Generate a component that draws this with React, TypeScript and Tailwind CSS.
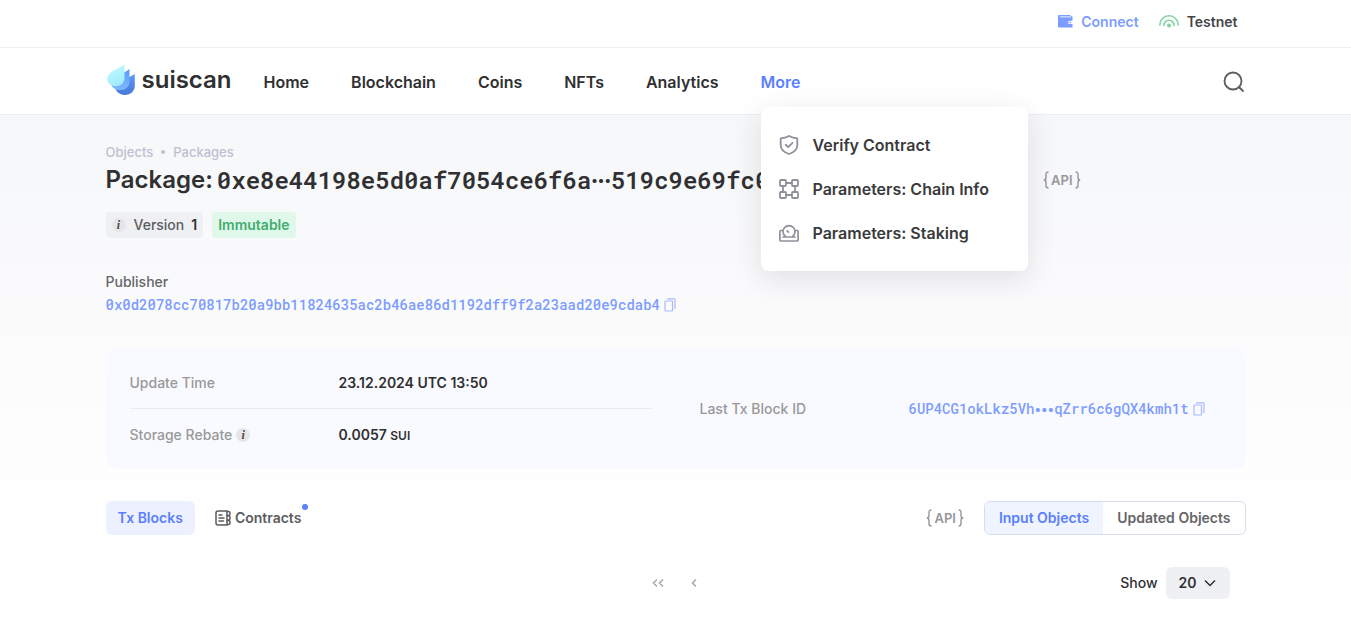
import React from "react";

const mono = "font-['Roboto_Mono','Liberation_Mono',monospace]";

function Logo() {
  return (
    <svg width="30" height="32" viewBox="0 0 30 32" aria-hidden="true">
      <defs>
        <linearGradient id="drop-back" x1="0" y1="0" x2="0" y2="1">
          <stop offset="0" stopColor="#5b9af5" />
          <stop offset="1" stopColor="#4878d8" />
        </linearGradient>
        <linearGradient id="drop-mid" x1="0" y1="0" x2="0" y2="1">
          <stop offset="0" stopColor="#5a9bf8" />
          <stop offset="1" stopColor="#7db8ff" />
        </linearGradient>
        <linearGradient id="drop-front" x1="0" y1="0" x2="0.4" y2="1">
          <stop offset="0" stopColor="#c4fbff" />
          <stop offset="1" stopColor="#a2ecff" />
        </linearGradient>
      </defs>
      <path d="M28.800 10v12c0 5-4.500 9-9.800 9-5 0-8.500-2.800-10-7.500 1-5 12-8.500 19.800-13.500z" fill="url(#drop-back)" />
      <path d="M23.500 5v12.500c0 5-4 8.500-9 8.500-4.500 0-8-1.500-9-5C7 14 17 9.500 23.500 5z" fill="url(#drop-mid)" />
      <path d="M18.500.5C14 4 6.500 6 2.800 10.500c-3.300 4-1.500 11.500 7 11.700 5.400 0 8.700-3.400 8.700-8.700z" fill="url(#drop-front)" />
    </svg>
  );
}

function WalletIcon() {
  return (
    <svg width="15" height="13" viewBox="0 0 15 13" aria-hidden="true">
      <path d="M1 0h11.500v1.200H14.500V12.500H1a1 1 0 0 1-1-1V1a1 1 0 0 1 1-1z" fill="#7d9cff" />
      <path d="M2 1.200h11v1.300H2z" fill="#d3ddff" />
      <path d="M15 5.800h-3.200a1.600 1.600 0 0 0 0 3.200H15z" fill="#fff" />
      <circle cx="12.300" cy="7.400" r=".9" fill="#7d9cff" />
    </svg>
  );
}

function SignalIcon() {
  return (
    <svg width="20" height="13" viewBox="0 0 20 13" fill="none" stroke="#7ed3a1" strokeWidth="1.600" strokeLinecap="round" aria-hidden="true">
      <path d="M.8 10a9.200 9.200 0 0 1 18.400 0" />
      <path d="M4.800 10.500a5.200 5.200 0 0 1 10.400 0" />
      <circle cx="10" cy="10.600" r="1.200" fill="#7ed3a1" />
    </svg>
  );
}

function SearchIcon() {
  return (
    <svg width="22" height="22" viewBox="0 0 22 22" fill="none" stroke="#5c5c5e" strokeWidth="1.800" strokeLinecap="round" aria-hidden="true">
      <circle cx="10" cy="10" r="8.500" />
      <path d="M16.500 16.500l3.500 3.500" />
    </svg>
  );
}

function ShieldIcon() {
  return (
    <svg width="20" height="20" viewBox="0 0 20 20" fill="none" stroke="#8f919a" strokeWidth="1.800" strokeLinecap="round" strokeLinejoin="round" aria-hidden="true">
      <path d="M10 1c2.600 1.500 5.300 2.200 8.300 2.300V10c0 4.500-4 7.500-8.300 9-4.300-1.500-8.300-4.500-8.300-9V3.300C4.700 3.200 7.400 2.500 10 1z" />
      <path d="M6.700 9.700l2.500 2.500 4.300-4.400" />
    </svg>
  );
}

function ChainIcon() {
  return (
    <svg width="20" height="20" viewBox="0 0 20 20" fill="none" stroke="#8f919a" strokeWidth="1.800" aria-hidden="true">
      <rect x="1" y="1" width="6" height="6" rx="1" />
      <rect x="13" y="1" width="6" height="6" rx="1" />
      <rect x="1" y="13" width="6" height="6" rx="1" />
      <rect x="13" y="13" width="6" height="6" rx="1" />
      <path d="M7 4h6M7 16h6M4 7v6M16 7v6" />
    </svg>
  );
}

function StakingIcon() {
  return (
    <svg width="20" height="20" viewBox="0 0 20 20" fill="none" stroke="#8f919a" strokeWidth="1.700" strokeLinecap="round" strokeLinejoin="round" aria-hidden="true">
      <path d="M3.500 7.500H1.900a1 1 0 0 0-1 1V17a1 1 0 0 0 1 1h16.200a1 1 0 0 0 1-1V8.500a1 1 0 0 0-1-1h-1.600" />
      <path d="M4 14h12" />
      <path d="M6.200 13.200a6 6 0 1 1 7.600 0" />
      <path d="M8.200 7.800l1.300 1.300" />
    </svg>
  );
}

function CopyIcon() {
  return (
    <svg width="12" height="14" viewBox="0 0 12 14" fill="none" stroke="#a9b9fd" strokeWidth="1.200" aria-hidden="true">
      <rect x="1" y="3" width="7.500" height="10" rx="0.800" />
      <path d="M3 .8h7.200a.8.8 0 0 1 .8.8V11" />
    </svg>
  );
}

function ContractIcon() {
  return (
    <svg width="16" height="16" viewBox="0 0 16 16" fill="none" stroke="#5c5c5e" strokeWidth="1.500" strokeLinecap="round" strokeLinejoin="round" aria-hidden="true">
      <path d="M12 1H3a2 2 0 0 0-2 2v10a2 2 0 0 0 2 2h9z" />
      <path d="M12 1.500h1.500a1.500 1.500 0 0 1 1.500 1.500v1a1.500 1.500 0 0 1-1.500 1.500H12M12 5.800h1.500A1.500 1.500 0 0 1 15 7.300v1.200a1.500 1.500 0 0 1-1.500 1.500H12M12 10.500h1.500A1.500 1.500 0 0 1 15 12v1a1.500 1.500 0 0 1-1.500 1.500H12" />
      <path d="M4 5h3M4 8h5M4 11h4.500" />
    </svg>
  );
}

function Chevrons({ double }: { double?: boolean }) {
  return (
    <svg width="12" height="8" viewBox="0 0 12 8" fill="none" stroke="#a8a8aa" strokeWidth="1.500" aria-hidden="true">
      {double ? <path d="M5 .5L1.500 4 5 7.500M11 .5L7.500 4 11 7.500" /> : <path d="M8 .5L4.500 4 8 7.500" />}
    </svg>
  );
}

function Info() {
  return (
    <span className="flex size-[14px] items-center justify-center rounded-full bg-[#e6e6e8] font-['Liberation_Serif',serif] text-[12px] leading-none font-bold text-[#48484a] italic">
      i
    </span>
  );
}

function ApiButton() {
  return (
    <button type="button" className="flex items-center gap-0.5 text-[13px] leading-5 font-semibold text-[#97979c]">
      <svg width="6" height="18" viewBox="0 0 6 18" fill="none" stroke="currentColor" strokeWidth="1.400" aria-hidden="true">
        <path d="M5.500 1C3.500 1 3 1.800 3 3.500v3C3 8 2.500 9 .8 9 2.500 9 3 10 3 11.500v3c0 1.700.5 2.500 2.500 2.500" />
      </svg>
      API
      <svg width="6" height="18" viewBox="0 0 6 18" fill="none" stroke="currentColor" strokeWidth="1.400" aria-hidden="true">
        <path d="M.5 1C2.500 1 3 1.800 3 3.500v3C3 8 3.500 9 5.200 9 3.500 9 3 10 3 11.500v3c0 1.700-.5 2.500-2.500 2.500" />
      </svg>
    </button>
  );
}

const links = ["Home", "Blockchain", "Coins", "NFTs", "Analytics"];
const menu = [
  { label: "Verify Contract", icon: <ShieldIcon /> },
  { label: "Parameters: Chain Info", icon: <ChainIcon /> },
  { label: "Parameters: Staking", icon: <StakingIcon /> },
];

export default function App() {
  return (
    <div className="min-h-screen bg-white font-[Inter,sans-serif] text-[#303032]">
      <div className="border-b border-[#f0f0f2]">
        <div className="mx-auto flex h-[47px] max-w-[1140px] items-center justify-end gap-5 pr-2 pb-1 text-[14px] leading-5 font-semibold">
          <button type="button" className="flex items-center gap-2 text-[#7d9cff]">
            <WalletIcon />
            Connect
          </button>
          <button type="button" className="flex items-center gap-2 text-[#454547]">
            <SignalIcon />
            Testnet
          </button>
        </div>
      </div>

      <header className="border-b border-[#eeeff2]">
        <div className="mx-auto flex h-[66px] max-w-[1140px] items-center pt-0.5">
          <a href="#home" className="mr-8 flex items-center gap-1.5 pb-1 text-[24px] leading-8 font-semibold">
            <Logo />
            <span>suiscan</span>
          </a>
          <nav className="flex items-center gap-[42px] text-[16px] leading-6 font-semibold">
            {links.map((l) => (
              <a key={l} href={"#" + l.toLowerCase()}>{l}</a>
            ))}
            <div className="relative">
              <button type="button" aria-expanded="true" className="text-[#5a7fff]">More</button>
              <ul className="absolute top-[37px] left-0 z-10 flex w-[267px] flex-col gap-5 rounded-lg bg-white px-[18px] py-[26px] shadow-[0_8px_30px_rgba(40,44,50,0.12)]">
                {menu.map((m) => (
                  <li key={m.label}>
                    <a href="#more" className="flex items-center gap-3.5 whitespace-nowrap text-[#3a3a3c]">
                      {m.icon}
                      {m.label}
                    </a>
                  </li>
                ))}
              </ul>
            </div>
          </nav>
          <button type="button" aria-label="Search" className="mr-px ml-auto"><SearchIcon /></button>
        </div>
      </header>

      <main className="bg-linear-to-b from-[#f6f7f9] to-white to-[420px]">
        <div className="mx-auto max-w-[1140px] pt-[27px] pb-5">
          <div className="flex items-center gap-2 text-[13px] leading-5 font-medium text-[#bdc0d0]">
            <a href="#objects">Objects</a>
            <span className="size-1 rounded-full bg-current" />
            <a href="#packages">Packages</a>
          </div>
          <div className="flex items-center justify-between pr-[165px]">
            <h1 className="flex items-center gap-1 text-[24px] leading-9 font-semibold">
              Package:
              <span className={mono + " flex items-center"}>
                0xe8e44198e5d0af7054ce6f6a
                <span className="font-[Inter,sans-serif] text-[13px]">•••</span>
                519c9e69fc0b4d7e82
              </span>
            </h1>
            <ApiButton />
          </div>
          <div className="mt-3.5 flex gap-[9px] text-[14px] leading-[26px] font-semibold">
            <span className="flex items-center gap-2 rounded bg-[#eff0f4] px-1.5 text-[#5c5c5e]">
              <Info />
              <span className="flex gap-[7px] font-medium">Version <b className="font-semibold text-[#303032]">1</b></span>
            </span>
            <span className="rounded bg-[#e0f8ea] px-1.5 text-[#43ad70]">Immutable</span>
          </div>

          <p className="mt-[34px] text-[14px] leading-5 font-medium text-[#666668]">Publisher</p>
          <div className="mt-[3px] flex items-center gap-1">
            <a href="#publisher" className={mono + " text-[14px] leading-5 font-medium text-[#7d9cff]"}>
              0x0d2078cc70817b20a9bb11824635ac2b46ae86d1192dff9f2a23aad20e9cdab4
            </a>
            <button type="button" aria-label="Copy publisher"><CopyIcon /></button>
          </div>

          <section className="mt-[34px] flex items-center gap-12 rounded-xl bg-[#f9faff] px-6 py-2 text-[14px] leading-5 font-medium">
            <dl className="flex-1">
              <div className="flex h-[52px] items-center border-b border-[#eaebf0]">
                <dt className="w-[209px] text-[#98989a]">Update Time</dt>
                <dd className="font-semibold">23.12.2024 UTC 13:50</dd>
              </div>
              <div className="flex h-[52px] items-center">
                <dt className="flex w-[209px] items-center gap-1 text-[#98989a]">Storage Rebate <Info /></dt>
                <dd className="font-semibold">0.0057 <span className="text-[12px]">SUI</span></dd>
              </div>
            </dl>
            <dl className="flex flex-1 items-center">
              <dt className="w-[209px] text-[#98989a]">Last Tx Block ID</dt>
              <dd className="flex items-center gap-1">
                <a href="#tx" className={mono + " flex items-center text-[#7d9cff]"}>
                  6UP4CG1okLkz5Vh
                  <span className="font-[Inter,sans-serif] text-[13px] font-semibold">•••</span>
                  qZrr6c6gQX4kmh1t
                </a>
                <button type="button" aria-label="Copy block ID"><CopyIcon /></button>
              </dd>
            </dl>
          </section>

          <div className="mt-8 flex items-center justify-between text-[14px] leading-5 font-semibold">
            <div className="flex items-center gap-5">
              <button type="button" className="h-[34px] rounded-md bg-[#edf1ff] px-3 text-[#5a7fff]">Tx Blocks</button>
              <button type="button" className="relative flex h-[34px] items-center gap-1 text-[#5c5c5e]">
                <ContractIcon />
                Contracts
                <span className="absolute top-[3px] -right-[7px] size-1.5 rounded-full bg-[#5a7fff]" />
              </button>
            </div>
            <div className="flex items-center gap-5">
              <ApiButton />
              <div className="flex h-[34px] overflow-hidden rounded-md border border-[#dadcec] bg-white">
                <button type="button" className="bg-[#eff4ff] px-3.5 text-[#5a7fff]">Input Objects</button>
                <button type="button" className="px-3.5 text-[#666668]">Updated Objects</button>
              </div>
            </div>
          </div>

          <div className="mt-8 grid grid-cols-3 items-center text-[14px] leading-5 font-semibold">
            <div className="col-start-2 flex justify-center gap-6">
              <button type="button" aria-label="First page"><Chevrons double /></button>
              <button type="button" aria-label="Previous page"><Chevrons /></button>
            </div>
            <div className="flex items-center justify-end gap-2 pr-4">
              <label htmlFor="page-size" className="font-medium">Show</label>
              <div className="relative">
                <select id="page-size" defaultValue="20" className="h-8 w-16 appearance-none rounded-md bg-[#eff0f4] pl-[13px]">
                  <option>20</option>
                  <option>40</option>
                  <option>60</option>
                </select>
                <svg className="pointer-events-none absolute top-3 right-3.5" width="12" height="8" viewBox="0 0 12 8" fill="none" stroke="#303032" strokeWidth="1.500" aria-hidden="true">
                  <path d="M1 1.500L6 6.500l5-5" />
                </svg>
              </div>
            </div>
          </div>
        </div>
      </main>
    </div>
  );
}
